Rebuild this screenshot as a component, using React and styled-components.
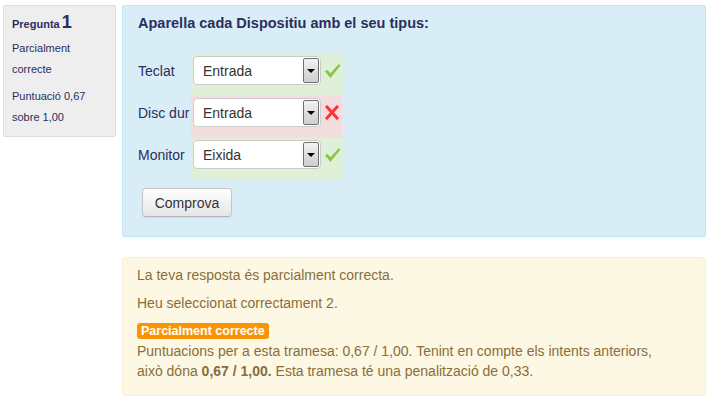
import React from "react";
import styled, { createGlobalStyle } from "styled-components";

const GlobalStyle = createGlobalStyle`
  body {
    margin: 0;
    background: #fff;
    font-family: "Liberation Sans", Arial, sans-serif;
    color: #333;
  }
`;

const Page = styled.div`
  display: flex;
  align-items: flex-start;
  gap: 6px;
  padding: 5px 7px 0 3px;
`;

const Info = styled.div`
  width: 113px;
  box-sizing: border-box;
  padding: 8px 8px 8px 8px;
  background: #eeeeee;
  border: 1px solid #dddddd;
  border-radius: 2px;
  color: #2b2d5e;
  font-size: 11px;
  line-height: 21px;
`;

const QNo = styled.h3`
  margin: 0 0 6px;
  font-size: 11px;
  font-weight: bold;
  line-height: 16px;
  span {
    font-size: 18px;
    margin-left: 2px;
  }
`;

const InfoLine = styled.div`
  margin-bottom: ${({ $gap }) => ($gap ? "6px" : "0")};
`;

const Content = styled.div`
  flex: 1;
  display: flex;
  flex-direction: column;
  gap: 20px;
`;

const Formulation = styled.div`
  background: #d9edf7;
  border: 1px solid #bce8f1;
  border-radius: 2px;
  padding: 8px 15px 19px 15px;
  color: #2b2d5e;
`;

const Title = styled.div`
  font-size: 14.5px;
  font-weight: bold;
  line-height: 18px;
  margin-bottom: 22px;
`;

const Table = styled.div`
  display: grid;
  grid-template-columns: 53px 152px;
`;

const Label = styled.div`
  display: flex;
  align-items: center;
  padding: 2px 0 11px 0;
  font-size: 14px;
  color: #2b2d5e;
  white-space: nowrap;
`;

const Control = styled.div`
  display: flex;
  align-items: center;
  padding: 2px 0 11px 2px;
  background: ${({ $ok }) => ($ok ? "#dff0d8" : "#f2dede")};
`;

const Select = styled.div`
  width: 128px;
  height: 29px;
  box-sizing: border-box;
  display: flex;
  align-items: stretch;
  background: #fff;
  border: 1px solid #cccccc;
  border-radius: 4px;
  padding: 1px 1px 1px 0;
`;

const SelectText = styled.div`
  flex: 1;
  display: flex;
  align-items: center;
  padding-left: 9px;
  font-size: 14px;
  color: #333;
`;

const Arrow = styled.div`
  width: 16px;
  box-sizing: border-box;
  border: 1px solid #707070;
  border-radius: 2px;
  background: linear-gradient(#f4f4f4, #dcdcdc 55%, #cfcfcf);
  display: flex;
  align-items: center;
  justify-content: center;
  &::after {
    content: "";
    border-left: 4px solid transparent;
    border-right: 4px solid transparent;
    border-top: 4px solid #000;
  }
`;

const Mark = styled.div`
  width: 22px;
  display: flex;
  justify-content: center;
  align-items: center;
`;

const Button = styled.button`
  margin-top: 8px;
  margin-left: 4px;
  width: 90px;
  height: 29px;
  font-family: "Liberation Sans", Arial, sans-serif;
  font-size: 14px;
  color: #333;
  background: linear-gradient(#ffffff, #e6e6e6);
  border: 1px solid #c5c5c5;
  border-bottom-color: #b3b3b3;
  border-radius: 4px;
  box-shadow: inset 0 1px 0 rgba(255, 255, 255, 0.2), 0 1px 2px rgba(0, 0, 0, 0.05);
`;

const Outcome = styled.div`
  background: #fcf8e3;
  border: 1px solid #fbeed5;
  border-radius: 4px;
  padding: 7px 34px 14px 14px;
  color: #8a6d3b;
  font-size: 14px;
  line-height: 20px;
`;

const Para = styled.p`
  margin: 0 0 8px;
`;

const BadgeRow = styled.div`
  display: flex;
  align-items: center;
  height: 20px;
`;

const Badge = styled.span`
  display: inline-block;
  background: #f89406;
  color: #fff;
  font-weight: bold;
  font-size: 12.5px;
  line-height: 16px;
  padding: 0 4px;
  border-radius: 3px;
`;

const Check = () => (
  <svg width="17" height="16" viewBox="0 0 17 16">
    <path d="M1 8.5 L3.2 6.8 L6.5 10.2 L14.8 1 L16.5 2.5 L6.5 15 Z" fill="#8cc63f" />
  </svg>
);

const Cross = () => (
  <svg width="14" height="15" viewBox="0 0 14 15">
    <path d="M2 2 L12 13 M12 2 L2 13" stroke="#ff3333" strokeWidth="3" strokeLinecap="square" />
  </svg>
);

const rows = [
  { label: "Teclat", value: "Entrada", ok: true },
  { label: "Disc dur", value: "Entrada", ok: false },
  { label: "Monitor", value: "Eixida", ok: true },
];

const App = () => (
  <>
    <GlobalStyle />
    <Page>
      <Info>
        <QNo>
          Pregunta<span>1</span>
        </QNo>
        <InfoLine>Parcialment</InfoLine>
        <InfoLine $gap>correcte</InfoLine>
        <InfoLine>Puntuació 0,67</InfoLine>
        <InfoLine>sobre 1,00</InfoLine>
      </Info>
      <Content>
        <Formulation>
          <Title>Aparella cada Dispositiu amb el seu tipus:</Title>
          <Table>
            {rows.map((r) => (
              <React.Fragment key={r.label}>
                <Label>{r.label}</Label>
                <Control $ok={r.ok}>
                  <Select>
                    <SelectText>{r.value}</SelectText>
                    <Arrow />
                  </Select>
                  <Mark>{r.ok ? <Check /> : <Cross />}</Mark>
                </Control>
              </React.Fragment>
            ))}
          </Table>
          <Button>Comprova</Button>
        </Formulation>
        <Outcome>
          <Para>La teva resposta és parcialment correcta.</Para>
          <Para>Heu seleccionat correctament 2.</Para>
          <BadgeRow>
            <Badge>Parcialment correcte</Badge>
          </BadgeRow>
          <div>
            Puntuacions per a esta tramesa: 0,67 / 1,00. Tenint en compte els intents anteriors,
            això dóna <b>0,67 / 1,00.</b> Esta tramesa té una penalització de 0,33.
          </div>
        </Outcome>
      </Content>
    </Page>
  </>
);

export default App;
